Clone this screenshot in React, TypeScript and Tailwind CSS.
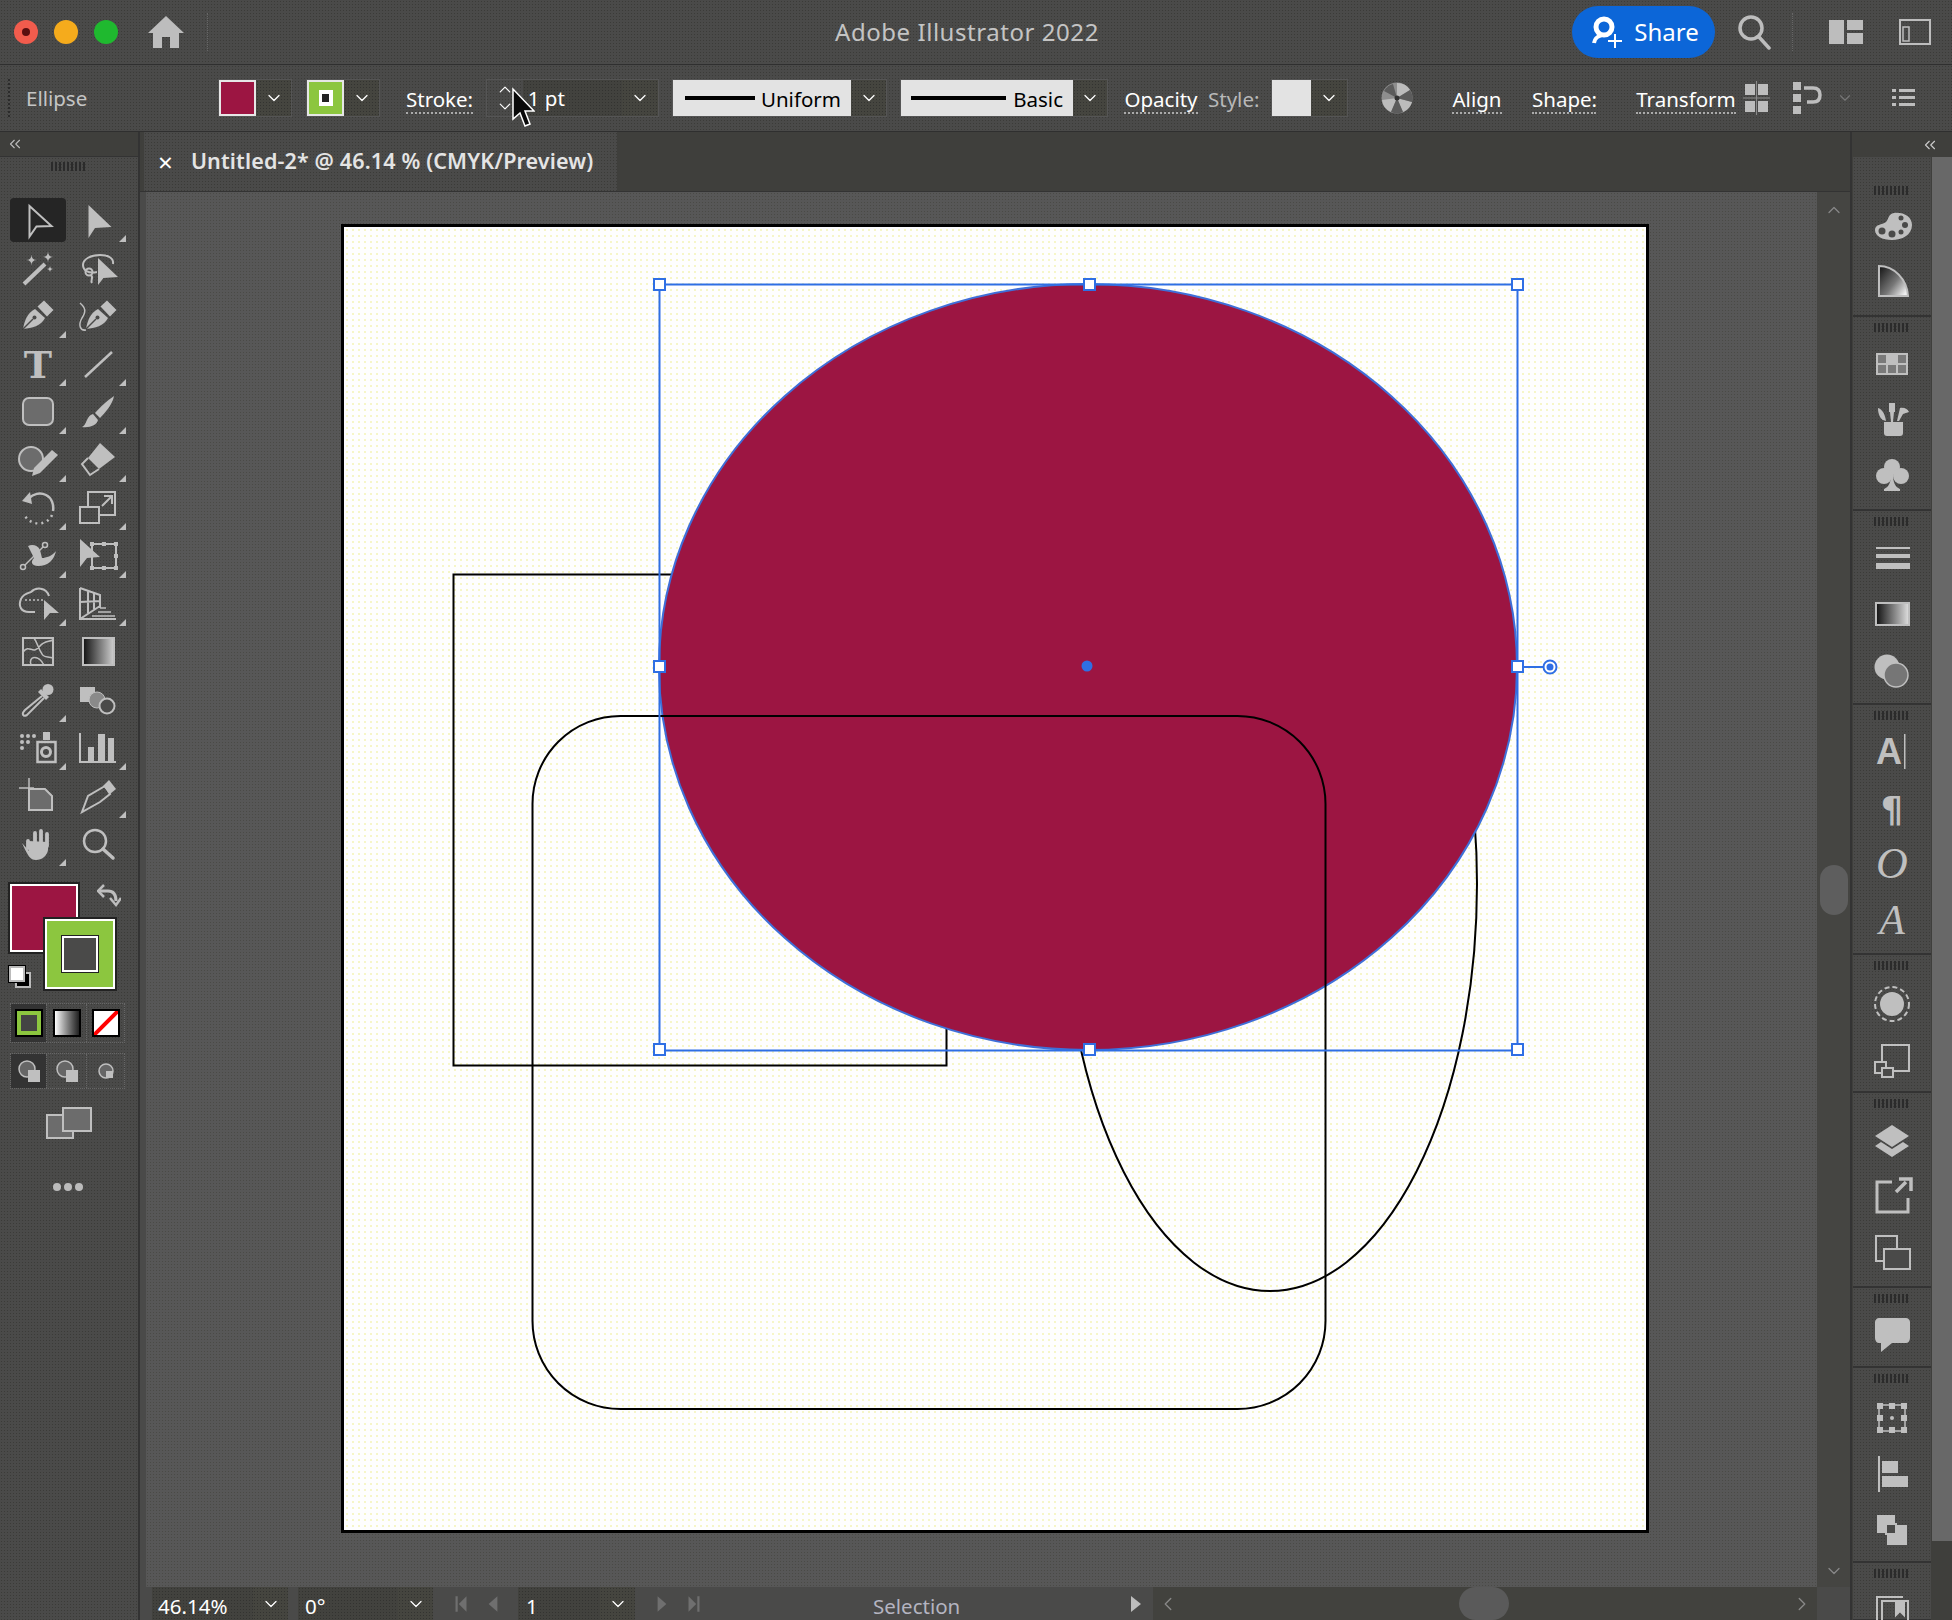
import { ChevronDown, ChevronUp, ChevronLeft, ChevronRight, ChevronsLeft } from 'lucide-react';
import type { ReactNode } from 'react';

const C = '#bfbfbf';
const PANEL = '#4a4a49';
const SANS = 'font-["Noto_Sans",sans-serif]';
const dots = 'bg-[radial-gradient(circle,#3b3b38_0.8px,transparent_0.9px)] bg-[length:3px_3px]';
const darkDots = 'bg-[radial-gradient(circle,#333330_0.8px,transparent_0.9px)] bg-[length:3px_3px]';

const star = (x: number, y: number, r: number) =>
  `M${x} ${y - r}Q${x} ${y} ${x + r} ${y}Q${x} ${y} ${x} ${y + r}Q${x} ${y} ${x - r} ${y}Q${x} ${y} ${x} ${y - r}Z`;

const Ico = ({ children, s = 40 }: { children: ReactNode; s?: number }) => (
  <svg width={s} height={s} viewBox="0 0 40 40" fill={C} className="overflow-visible block">
    {children}
  </svg>
);

const Nib = () => (
  <>
    <path d="M5 33C6.500 25 9 17 17 13L27 22C23 30 14 32 5 33Z" />
    <path d="M5 33L15 23" stroke={PANEL} strokeWidth="1.500" />
    <circle cx="16.500" cy="21.500" r="2" fill={PANEL} />
    <path d="M19.500 10.500L26 4.500L35.500 14L29 20.500Z" />
  </>
);

const tools: { icon: ReactNode; tri?: boolean; active?: boolean }[] = [
  { active: true, icon: <path d="M11.500 6L33.500 26L18.500 26.500L11.500 36.500Z" fill="none" stroke={C} strokeWidth="2" /> },
  { tri: true, icon: <path d="M10.500 5L33.500 27L17 28L10.500 38Z" /> },
  { icon: <><path d="M6 36L27 16" stroke={C} strokeWidth="4" /><path d={star(13.500, 12, 5.500)} /><path d={star(30, 9, 5.500)} /><path d={star(32, 21, 3.500)} /></> },
  { icon: <><path d="M19 24C10 26 5 22 5 17C5 11 13 7 22 7C30 7 36 10 35 16" fill="none" stroke={C} strokeWidth="2" /><circle cx="11" cy="24" r="3.500" fill="none" stroke={C} strokeWidth="2" /><path d="M13 27C16 30 12 32 14 35" fill="none" stroke={C} strokeWidth="2" /><path d="M20 10L40 29L25.500 30L20 37Z" /></> },
  { tri: true, icon: <Nib /> },
  { icon: <><g transform="translate(3 0)"><Nib /></g><path d="M2 7C8 12 8 16 4 22C0 29 2 35 8 34" fill="none" stroke={C} strokeWidth="1.500" /></> },
  { tri: true, icon: <text x="20" y="34" textAnchor="middle" fontSize="38" fontWeight="700" fontFamily="DejaVu Serif, serif" fill={C}>T</text> },
  { tri: true, icon: <path d="M7 33L34 8" stroke={C} strokeWidth="2.500" /> },
  { tri: true, icon: <rect x="5" y="6" width="30" height="27" rx="6" fill="#6c6c6c" stroke={C} strokeWidth="2" /> },
  { tri: true, icon: <><path d="M4 35C9 33 8 24 15 22L20 28C19 33 12 36 4 35Z" /><path d="M17 21C22 15 30 8 36 4C35 11 28 20 22 26Z" /></> },
  { tri: true, icon: <><circle cx="13" cy="19" r="12" fill="#6c6c6c" stroke={C} strokeWidth="2" /><path d="M14 36L16 28L34 10L40 15L22 33Z" /></> },
  { tri: true, icon: <><path d="M22 3L37 17L21 29L10 18Z" /><path d="M10 18L4 24L12 35L21 29" fill="none" stroke={C} strokeWidth="2" /></> },
  { tri: true, icon: <><path d="M4 13L12 4L14 16Z" /><path d="M11 10C15 6 22 4 28 7C34 10 36 17 35 23" fill="none" stroke={C} strokeWidth="2.500" /><path d="M34 27C30 37 14 39 7 28" fill="none" stroke={C} strokeWidth="2.500" strokeDasharray="2 4" /></> },
  { tri: true, icon: <><path d="M10 19V4H37V27H21" fill="none" stroke={C} strokeWidth="2" /><rect x="2" y="19" width="19" height="16" fill="none" stroke={C} strokeWidth="2" /><path d="M24 18L33 9M26 8H34V16" fill="none" stroke={C} strokeWidth="2" /></> },
  { tri: true, icon: <><path d="M10 10C14 8 20 9 22 14L24 22C28 22 34 20 38 15C36 24 30 30 20 30C14 30 12 26 16 22C14 18 12 14 10 10Z" /><path d="M5 31L27 9" stroke={C} strokeWidth="1.500" /><circle cx="5" cy="31" r="2.500" fill={PANEL} stroke={C} strokeWidth="1.500" /><circle cx="27" cy="9" r="2.500" fill={PANEL} stroke={C} strokeWidth="1.500" /></> },
  { tri: true, icon: <><rect x="14" y="8" width="24" height="24" fill="none" stroke={C} strokeWidth="2" /><g><rect x="12" y="6" width="4" height="4" /><rect x="24" y="6" width="4" height="4" /><rect x="36" y="6" width="4" height="4" /><rect x="36" y="18" width="4" height="4" /><rect x="12" y="30" width="4" height="4" /><rect x="24" y="30" width="4" height="4" /><rect x="36" y="30" width="4" height="4" /></g><path d="M2 3L22 21L9 22L2 31Z" /></> },
  { tri: true, icon: <><path d="M17 28H11C3 28 0 22 3 15C5 10 10 9 13 8C18 3 28 3 31 12" fill="none" stroke={C} strokeWidth="2" /><path d="M7 16H25" stroke={C} strokeWidth="1.500" strokeDasharray="2 2" /><path d="M26 16L41 29L32 29L26 36Z" /></> },
  { tri: true, icon: <g fill="none" stroke={C} strokeWidth="1.500"><path d="M2 4L22 11V24M2 4V35H38M2 35L22 22M2 18L22 17M10 7V29M16 9V25" strokeWidth="2" /><path d="M22 24H28M20 28H33M14 32H37" /></g> },
  { icon: <g fill="none" stroke={C} strokeWidth="2"><rect x="5" y="6" width="30" height="27" /><path d="M5 20C12 11 14 24 22 14C26 9 30 10 35 8M13 33C10 24 20 22 26 33M16 6C20 12 20 16 24 22C26 26 30 24 35 26" strokeWidth="1.500" /></g> },
  { icon: <><defs><linearGradient id="tg" x1="0" x2="1"><stop offset="0" stopColor="#111" /><stop offset="1" stopColor="#d0d0d0" /></linearGradient></defs><rect x="5" y="6" width="31" height="27" fill="url(#tg)" stroke={C} strokeWidth="2" /></> },
  { tri: true, icon: <><circle cx="30" cy="9.500" r="5.500" /><path d="M23 9L31 17L28 20L20 12Z" /><path d="M24 16L7 30C3 34 5 37 9 35L26 18" fill="none" stroke={C} strokeWidth="2" /></> },
  { icon: <><rect x="2" y="7" width="15" height="15" /><circle cx="19" cy="20" r="8" fill="#8a8a8a" stroke={C} strokeWidth="1" /><circle cx="29" cy="26" r="7.500" fill={PANEL} stroke={C} strokeWidth="2" /></> },
  { tri: true, icon: <><g><circle cx="4" cy="8" r="2" /><circle cx="10" cy="8" r="2" /><circle cx="16" cy="8" r="2" /><circle cx="4" cy="14" r="2" /><circle cx="10" cy="14" r="2" /><circle cx="4" cy="20" r="2" /></g><rect x="25" y="4" width="7" height="8" /><rect x="19.500" y="14" width="18" height="20" fill="none" stroke={C} strokeWidth="2.500" /><circle cx="28" cy="24" r="4.500" fill="none" stroke={C} strokeWidth="3" /></> },
  { tri: true, icon: <><path d="M2 5V34H38" fill="none" stroke={C} strokeWidth="2" /><rect x="10" y="19" width="6" height="15" /><rect x="20" y="6" width="7" height="28" /><rect x="30" y="10" width="6" height="24" /></> },
  { icon: <><path d="M11 2V17M1 12H16" stroke={C} strokeWidth="1.500" /><path d="M11 13H27L34 20V34H11Z" fill="#6c6c6c" stroke={C} strokeWidth="2" /></> },
  { tri: true, icon: <><path d="M4 36L10 20L27 10L32 18L22 26Z" fill="none" stroke={C} strokeWidth="2" /><path d="M25 10L31 4L38 13L32 18Z" /></> },
  { tri: true, icon: <><path d="M10 24V17M17 22V9M23 21V7M29 22V10" stroke={C} strokeWidth="3.800" strokeLinecap="round" fill="none" /><path d="M4 19L11 27L10 17L30 18L30 26C29 32 24 36 18 36C12 36 10 32 4 19Z" /></> },
  { icon: <><circle cx="17" cy="17" r="11" fill="none" stroke={C} strokeWidth="2.500" /><path d="M25 25L35 34" stroke={C} strokeWidth="3.500" strokeLinecap="round" /></> },
];

const Grip = () => (
  <div className="w-[36px] h-[9px] bg-[repeating-linear-gradient(90deg,#2b2b2b_0_2px,transparent_2px_4px)]" />
);

const dock: { h: string; top: string; icons: ReactNode[] }[] = [
  {
    h: 'h-[160px]', top: 'mt-[2px]', icons: [
      <><path d="M22 8C32 7 40 12 40 20C40 30 30 35 20 35C10 35 3 31 3 25C3 19 10 20 14 17C17 14 16 9 22 8Z" /><g fill={PANEL}><circle cx="10" cy="26" r="3.500" /><circle cx="20" cy="29" r="3.500" /><circle cx="29" cy="27" r="2.500" /><circle cx="33" cy="20" r="3" /><circle cx="29" cy="13" r="2.500" /></g></>,
      <><defs><linearGradient id="dg" x1="0" y1="0" x2="1" y2="0.8"><stop offset="0" stopColor="#111" /><stop offset="0.6" stopColor="#777" /><stop offset="1" stopColor="#f0f0f0" /></linearGradient></defs><path d="M7 5C22 5 35 18 36 35H7Z" fill="url(#dg)" stroke={C} strokeWidth="2" /></>,
    ],
  },
  {
    h: 'h-[194px]', top: 'mt-[4px]', icons: [
      <><rect x="4" y="9" width="32" height="22" /><g fill="#7a7a7a"><rect x="6" y="11" width="8" height="8" /><rect x="26" y="11" width="8" height="8" /><rect x="6" y="21" width="8" height="8" /><rect x="16" y="21" width="8" height="8" /><rect x="26" y="21" width="8" height="8" /></g></>,
      <><path d="M12 22H31V33C31 35 30 36 28 36H15C13 36 12 35 12 33Z" /><rect x="17" y="3" width="6" height="9" /><path d="M18 12H22L21 22H19Z" /><path d="M6 8C10 9 13 14 14 21L11 20C8 18 6 14 6 8Z" /><path d="M28 8C32 7 36 9 37 12L31 14L27 21H25L28 8Z" /></>,
      <><circle cx="20" cy="11" r="8" /><circle cx="12" cy="20" r="8" /><circle cx="29" cy="20" r="8" /><path d="M19 18H21C21 26 23 31 28 33V35H12V33C17 31 19 26 19 18Z" /></>,
    ],
  },
  {
    h: 'h-[194px]', top: 'mt-[4px]', icons: [
      <><rect x="4" y="9" width="34" height="2" /><rect x="4" y="16" width="34" height="4" /><rect x="4" y="25" width="34" height="6" /></>,
      <><defs><linearGradient id="dg2" x1="0" x2="1"><stop offset="0" stopColor="#111" /><stop offset="1" stopColor="#e0e0e0" /></linearGradient></defs><rect x="4" y="9" width="33" height="22" fill="url(#dg2)" stroke={C} strokeWidth="2" /></>,
      <><circle cx="15" cy="17" r="12.500" /><circle cx="24" cy="25" r="12" fill="#767676" stroke={C} strokeWidth="1.500" /></>,
    ],
  },
  {
    h: 'h-[250px]', top: 'mt-[3px]', icons: [
      <><text x="17" y="33" textAnchor="middle" fontSize="36" fontWeight="700" fontFamily="Liberation Sans, sans-serif" fill={C}>A</text><rect x="32" y="3" width="1.500" height="35" /></>,
      <text x="20" y="35" textAnchor="middle" fontSize="35" fontWeight="700" fontFamily="DejaVu Sans, sans-serif" fill={C}>¶</text>,
      <text x="20" y="35" textAnchor="middle" fontSize="44" fontStyle="italic" fontFamily="Liberation Serif, serif" fill={C}>O</text>,
      <text x="20" y="35" textAnchor="middle" fontSize="42" fontStyle="italic" fontFamily="Liberation Serif, serif" fill={C}>A</text>,
    ],
  },
  {
    h: 'h-[138px]', top: 'mt-[6px]', icons: [
      <><circle cx="20" cy="20" r="12" /><circle cx="20" cy="20" r="17" fill="none" stroke={C} strokeWidth="2" strokeDasharray="5 3" /></>,
      <g fill="none" stroke={C} strokeWidth="2"><rect x="10" y="5" width="27" height="26" /><rect x="3" y="22" width="11" height="11" fill={PANEL} /><rect x="10" y="28" width="11" height="9" fill={PANEL} /></g>,
    ],
  },
  {
    h: 'h-[195px]', top: 'mt-[4px]', icons: [
      <><path d="M20 5L37 16L20 27L3 16Z" /><path d="M9 22L20 29L31 22L37 26L20 37L3 26Z" /></>,
      <><path d="M20 6H5V36H36V22" fill="none" stroke={C} strokeWidth="3" /><path d="M24 16L34 6M27 3H39V15" fill="none" stroke={C} strokeWidth="3.500" /></>,
      <g fill="none" stroke={C} strokeWidth="2"><rect x="4" y="4" width="21" height="25" /><rect x="12" y="17" width="26" height="20" fill={PANEL} /></g>,
    ],
  },
  {
    h: 'h-[80px]', top: 'mt-[2px]', icons: [
      <path d="M7 5H34C36 5 38 7 38 9V25C38 28 36 30 34 30H20L9 39V30H7C5 30 3 28 3 25V9C3 7 5 5 7 5Z" />,
    ],
  },
  {
    h: 'h-[195px]', top: 'mt-[7px]', icons: [
      <><rect x="7" y="7" width="26" height="26" fill="none" stroke={C} strokeWidth="1.500" /><g><rect x="5" y="5" width="6" height="6" /><rect x="17" y="5" width="6" height="6" /><rect x="29" y="5" width="6" height="6" /><rect x="5" y="17" width="6" height="6" /><rect x="29" y="17" width="6" height="6" /><rect x="5" y="29" width="6" height="6" /><rect x="17" y="29" width="6" height="6" /><rect x="29" y="29" width="6" height="6" /><circle cx="20" cy="20" r="2" /></g></>,
      <><rect x="6" y="2" width="2" height="36" /><rect x="10" y="7" width="16" height="12" /><rect x="10" y="22" width="26" height="11" /></>,
      <><rect x="5" y="5" width="18" height="18" /><rect x="15" y="15" width="20" height="20" /><rect x="14" y="14" width="10" height="10" fill={PANEL} stroke={C} strokeWidth="2" /></>,
    ],
  },
  {
    h: 'h-[58px]', top: 'mt-[5px]', icons: [
      <g fill="none" stroke={C} strokeWidth="2"><path d="M5 38V6H31" /><path d="M10 10H36V40H10Z" /><path d="M24 10V24L28 20L32 24V10" fill={C} /></g>,
    ],
  },
];

const Chev = ({ dim }: { dim?: boolean }) => (
  <ChevronDown size={20} strokeWidth={1.500} className={dim ? 'text-[#777]' : 'text-white'} />
);

const Drop = ({ w }: { w: string }) => (
  <div className={`${w} h-full flex items-center justify-center ${darkDots} bg-[#45453f]`}>
    <Chev />
  </div>
);

const Label = ({ children, cn }: { children: ReactNode; cn: string }) => (
  <span className={`${cn} mt-[3px] text-[20.500px] leading-[26px] text-white border-b-2 border-dotted border-[#aaa] whitespace-nowrap text-center`}>
    {children}
  </span>
);

const Tool = ({ icon, tri, active }: { icon: ReactNode; tri?: boolean; active?: boolean }) => (
  <div className="relative w-[60px] h-[48px] flex items-center justify-center">
    {active && <div className="absolute inset-x-[2px] inset-y-[2px] bg-[#252525] rounded-[4px]" />}
    <div className="relative">
      <Ico>{icon}</Ico>
    </div>
    {tri && <div className="absolute right-[2px] bottom-[2px] w-[7px] h-[7px] bg-[#bfbfbf] [clip-path:polygon(100%_0,100%_100%,0_100%)]" />}
  </div>
);

const NavIcon = ({ d }: { d: string }) => (
  <svg width="16" height="22" viewBox="0 0 14 20" fill="#6f6f6f"><path d={d} /></svg>
);

export default function App() {
  return (
    <div className={`w-[1952px] h-[1620px] flex flex-col overflow-hidden bg-[#4a4a49] text-[#c8c8c8] ${SANS}`}>
      {/* title bar */}
      <div className={`relative h-[65px] shrink-0 flex items-center border-b border-[#2f2f2f] bg-[#4a4a49] ${dots}`}>
        <div className="ml-[14px] w-[24px] h-[24px] rounded-full bg-[#f25c4d] flex items-center justify-center">
          <div className="w-[8px] h-[8px] rounded-full bg-[#5a0f0f]" />
        </div>
        <div className="ml-[16px] w-[24px] h-[24px] rounded-full bg-[#f5ab1c]" />
        <div className="ml-[16px] w-[24px] h-[24px] rounded-full bg-[#1fb92f]" />
        <svg className="ml-[30px]" width="36" height="32" viewBox="0 0 36 32" fill="#bdbdbd">
          <path d="M18 0L36 17H31V32H22V21H14V32H5V17H0Z" />
        </svg>
        <div className="ml-[23px] w-px h-[38px] border-l border-dotted border-[#666]" />
        <span className="absolute left-[835px] text-[24px] tracking-[0.55px] text-[#c4c4c4] whitespace-nowrap">Adobe Illustrator 2022</span>
        <div className="ml-auto flex items-center">
          <div className="w-[143px] h-[52px] rounded-full bg-[#0c66d8] flex items-center justify-center gap-[10px]">
            <svg width="36" height="36" viewBox="0 0 36 36" fill="none" stroke="white">
              <circle cx="16" cy="13" r="8" strokeWidth="5" />
              <path d="M6 29C7 23 11 22 14 21" strokeWidth="4" />
              <path d="M27 20V34M20 27H34" strokeWidth="2" />
            </svg>
            <span className="text-[24px] text-white">Share</span>
          </div>
          <svg className="ml-[22px]" width="34" height="36" viewBox="0 0 34 36" fill="none" stroke="#bdbdbd" strokeWidth="3.500">
            <circle cx="14" cy="14" r="11" />
            <path d="M22 23L32 34" strokeLinecap="round" />
          </svg>
          <div className="ml-[21px] w-px h-[38px] border-l border-dotted border-[#666]" />
          <svg className="ml-[36px]" width="34" height="24" viewBox="0 0 34 24" fill="#bdbdbd">
            <rect x="0" y="0" width="15" height="24" />
            <rect x="18" y="0" width="16" height="10" />
            <rect x="18" y="13" width="16" height="11" />
          </svg>
          <svg className="ml-[36px] mr-[21px]" width="32" height="26" viewBox="0 0 32 26" fill="none" stroke="#bdbdbd" strokeWidth="2">
            <rect x="1" y="1" width="30" height="24" />
            <rect x="4" y="8" width="6" height="14" strokeWidth="1.500" />
          </svg>
        </div>
      </div>

      {/* control bar */}
      <div className={`relative h-[67px] shrink-0 flex items-center border-b border-[#2f2f2f] bg-[#4a4a49] ${dots}`}>
        <div className="ml-[8px] w-[2px] h-[38px] border-l-2 border-dotted border-[#2b2b2b]" />
        <span className="ml-[16px] mt-[1px] w-[192px] text-[20.500px] text-[#c4c4c4]">Ellipse</span>
        <div className="w-[74px] h-[38px] flex border border-[#555]">
          <div className="w-[38px] h-full bg-[#9c1542] border-2 border-[#e6e6e6]" />
          <Drop w="w-[36px]" />
        </div>
        <div className="ml-[14px] w-[74px] h-[38px] flex border border-[#555]">
          <div className="w-[38px] h-full bg-[#8cc63f] border-2 border-[#e6e6e6] flex items-center justify-center">
            <div className="w-[14px] h-[16px] bg-white flex items-center justify-center">
              <div className="w-[7px] h-[8px] bg-[#222]" />
            </div>
          </div>
          <Drop w="w-[36px]" />
        </div>
        <Label cn="ml-[26px] w-[67px]">Stroke:</Label>
        <div className="ml-[13px] w-[173px] h-[38px] flex border border-[#555]">
          <div className="w-[36px] h-full flex flex-col items-center justify-center">
            <ChevronUp size={20} strokeWidth={1.500} className="text-white -mb-[1px]" />
            <ChevronDown size={20} strokeWidth={1.500} className="text-white -mt-[1px]" />
          </div>
          <div className={`w-[100px] h-full flex items-center ${darkDots} bg-[#42423e] text-[20.500px] text-white`}>
            <span className="ml-[5px]">1 pt</span>
          </div>
          <Drop w="w-[36px]" />
        </div>
        <div className="ml-[13px] w-[215px] h-[38px] flex border border-[#555]">
          <div className="w-[178px] h-full bg-[#e3e3e3] flex items-center justify-between pl-[12px] pr-[10px] text-black text-[20.500px]">
            <div className="w-[70px] h-[4px] bg-black" />
            <span className="mt-[2px]">Uniform</span>
          </div>
          <Drop w="flex-1" />
        </div>
        <div className="ml-[13px] w-[208px] h-[38px] flex border border-[#555]">
          <div className="w-[172px] h-full bg-[#e3e3e3] flex items-center justify-between px-[10px] text-black text-[20.500px]">
            <div className="w-[95px] h-[4px] bg-black" />
            <span className="mt-[2px]">Basic</span>
          </div>
          <Drop w="flex-1" />
        </div>
        <Label cn="ml-[16px] w-[74px]">Opacity</Label>
        <span className="ml-[10px] mt-[2px] w-[53px] text-[20.500px] text-[#b8b8b8]">Style:</span>
        <div className="ml-[10px] w-[77px] h-[38px] flex border border-[#555]">
          <div className="w-[39px] h-full bg-[#e3e3e3]" />
          <Drop w="flex-1" />
        </div>
        <svg className="ml-[33px]" width="32" height="32" viewBox="0 0 32 32">
          <circle cx="16" cy="16" r="15.500" fill="#8e8e8e" />
          <path d="M16 16L16 1A15 15 0 0 1 29 8ZM16 16L31 20A15 15 0 0 1 22 30ZM16 16L10 30A15 15 0 0 1 1 18Z" fill="#bcbcbc" />
          <path d="M16 16L3 9A15 15 0 0 1 12 2ZM16 16L29 8A15 15 0 0 1 31 20ZM16 16L22 30A15 15 0 0 1 10 30Z" fill="#5c5c5c" />
          <circle cx="16" cy="16" r="2.500" fill="#333" />
        </svg>
        <Label cn="ml-[39px] w-[50px]">Align</Label>
        <Label cn="ml-[30px] w-[64px]">Shape:</Label>
        <Label cn="ml-[40px] w-[100px]">Transform</Label>
        <svg className="ml-[7px]" width="27" height="34" viewBox="0 0 27 34" fill="#bdbdbd">
          <rect x="2" y="3" width="10" height="11" /><rect x="15" y="3" width="10" height="11" />
          <rect x="2" y="20" width="10" height="11" /><rect x="15" y="20" width="10" height="11" />
          <path d="M0 17H27M13.500 0V34" stroke="#8a8a8a" strokeWidth="1" />
        </svg>
        <svg className="ml-[23px]" width="29" height="32" viewBox="0 0 29 32" fill="#bdbdbd">
          <rect x="0" y="0" width="8" height="8" /><rect x="0" y="12" width="8" height="8" /><rect x="0" y="24" width="8" height="8" />
          <path d="M11 6H20C25 6 27 9 27 13C27 17 25 20 20 20H14" fill="none" stroke="#bdbdbd" strokeWidth="3.500" />
        </svg>
        <ChevronDown size={18} strokeWidth={1.500} className="ml-[14px] text-[#777]" />
        <svg className="ml-[38px]" width="23" height="20" viewBox="0 0 23 20" fill="#bdbdbd">
          <rect x="0" y="1" width="4" height="3" /><rect x="7" y="1" width="16" height="3" />
          <rect x="0" y="8" width="4" height="3" /><rect x="7" y="8" width="16" height="3" />
          <rect x="0" y="15" width="4" height="3" /><rect x="7" y="15" width="16" height="3" />
        </svg>
        {/* pointer over the stepper */}
        <svg className="absolute left-[511px] top-[22px]" width="24" height="42" viewBox="0 0 24 42">
          <path d="M2 2L2 32L9 26L14 39L19 37L14 24L23 24Z" fill="#0a0a0a" stroke="white" strokeWidth="1.500" />
        </svg>
      </div>

      <div className="flex-1 flex min-h-0">
        {/* tools */}
        <div className="w-[140px] shrink-0 flex flex-col border-r-2 border-[#333]">
          <div className="h-[25px] bg-[#3f3f3c] flex items-center border-b border-[#333] pl-[6px]">
            <ChevronsLeft size={18} strokeWidth={1.500} className="text-[#bbb]" />
          </div>
          <div className={`flex-1 flex flex-col bg-[#4a4a49] ${dots}`}>
            <div className="h-[39px] pt-[5px] flex justify-center"><Grip /></div>
            <div className="ml-[8px] grid grid-cols-[60px_60px]">
              {tools.map((t, i) => <Tool key={i} {...t} />)}
            </div>
            <div className="relative ml-[10px] mt-[16px] w-[118px] h-[105px]">
              <div className="absolute left-0 top-0 w-[68px] h-[68px] bg-[#9c1542] border-2 border-white outline-2 outline-[#222]" />
              <div className="absolute left-[35px] top-[35px] w-[70px] h-[70px] bg-[#8cc63f] border-2 border-white outline-2 outline-[#222] flex items-center justify-center">
                <div className="w-[36px] h-[36px] bg-[#4a4a49] border-2 border-white outline outline-[#222]" />
              </div>
              <svg className="absolute left-[87px] top-[0px]" width="24" height="24" viewBox="0 0 24 24" fill="none" stroke="#bdbdbd" strokeWidth="3">
                <path d="M3 7H11C17 7 19 11 19 17" />
                <path d="M7 1L1 7L7 13M13 14L19 21L24 14" strokeWidth="2.500" />
              </svg>
              <div className="absolute left-[-1px] top-[82px] w-[16px] h-[16px] bg-white border-2 border-[#bbb] outline outline-black z-10" />
              <div className="absolute left-[5px] top-[88px] w-[16px] h-[16px] bg-black border-2 border-[#bbb]" />
            </div>
            <div className="ml-[10px] mt-[14px] w-[115px] h-[40px] flex border border-dotted border-[#666]">
              <div className="w-[35px] h-full bg-[#333] flex items-center justify-center">
                <div className="w-[24px] h-[24px] bg-[#444] border-[4px] border-[#8cc63f] outline-2 outline-black" />
              </div>
              <div className="w-[41px] h-full flex items-center justify-center border-x border-dotted border-[#666]">
                <div className="w-[24px] h-[24px] bg-gradient-to-r from-white to-[#222] outline-2 outline-black" />
              </div>
              <div className="flex-1 h-full flex items-center justify-center">
                <svg width="24" height="24" viewBox="0 0 24 24" className="outline-2 outline-black">
                  <rect width="24" height="24" fill="white" />
                  <path d="M0 24L24 0" stroke="#ff0000" strokeWidth="4" />
                </svg>
              </div>
            </div>
            <div className="ml-[10px] mt-[10px] w-[115px] h-[36px] flex border border-dotted border-[#666]">
              <div className="w-[35px] h-full bg-[#333] flex items-center justify-center">
                <svg width="24" height="24" viewBox="0 0 24 24"><circle cx="10" cy="10" r="8" fill="#666" stroke={C} strokeWidth="1.500" /><rect x="11" y="11" width="12" height="12" fill={C} /></svg>
              </div>
              <div className="w-[41px] h-full flex items-center justify-center border-x border-dotted border-[#666]">
                <svg width="24" height="24" viewBox="0 0 24 24"><circle cx="10" cy="10" r="8" fill="#666" stroke={C} strokeWidth="1.500" /><rect x="11" y="11" width="12" height="12" fill={C} /></svg>
              </div>
              <div className="flex-1 h-full flex items-center justify-center">
                <svg width="20" height="20" viewBox="0 0 20 20"><circle cx="10" cy="10" r="7" fill="#666" stroke={C} strokeWidth="1.500" /><rect x="10" y="10" width="7" height="7" fill={C} /></svg>
              </div>
            </div>
            <svg className="ml-[46px] mt-[18px]" width="46" height="32" viewBox="0 0 46 32" fill="#6c6c6c" stroke={C} strokeWidth="2">
              <rect x="1" y="8" width="26" height="23" />
              <rect x="17" y="1" width="28" height="23" />
            </svg>
            <div className="ml-[53px] mt-[44px] flex gap-[3px]">
              <div className="w-[8px] h-[8px] rounded-full bg-[#bbb]" />
              <div className="w-[8px] h-[8px] rounded-full bg-[#bbb]" />
              <div className="w-[8px] h-[8px] rounded-full bg-[#bbb]" />
            </div>
          </div>
        </div>

        {/* document */}
        <div className="w-[1710px] flex flex-col min-w-0">
          <div className="h-[60px] shrink-0 flex border-b border-[#333] bg-[#3f3f3c]">
            <div className={`ml-[4px] w-[473px] flex items-center bg-[#4a4a49] ${dots}`}>
              <span className="ml-[14px] text-[26px] leading-none text-white">×</span>
              <span className="ml-[18px] text-[21.500px] font-semibold tracking-[0.15px] text-[#e4e4e4] whitespace-nowrap">Untitled-2* @ 46.14 % (CMYK/Preview)</span>
            </div>
          </div>
          <div className="flex-1 flex min-h-0">
            <div className="ml-[6px] flex-1 pl-[195px] pt-[32px] bg-[#575757] bg-[radial-gradient(circle,#4a4a46_0.8px,transparent_0.9px)] bg-[length:3px_3px]">
              <div className="w-[1308px] h-[1309px] border-[3px] border-black bg-[#fefefe] bg-[radial-gradient(circle,#f6f6c8_0.8px,transparent_0.9px)] bg-[length:6px_6px]">
                <svg width="1302" height="1303" viewBox="344 227 1302 1303" className="block">
                  <g fill="none" stroke="#000" strokeWidth="2">
                    <rect x="453.500" y="574.500" width="493" height="491" />
                    <ellipse cx="1270" cy="884" rx="207" ry="407" />
                  </g>
                  <ellipse cx="1088" cy="667" rx="429" ry="383" fill="#9c1542" stroke="#3f6fd8" strokeWidth="2" />
                  <rect x="532.500" y="716" width="793" height="693" rx="88" fill="none" stroke="#000" strokeWidth="2" />
                  <g stroke="#2f6fe4" strokeWidth="2" fill="none">
                    <rect x="659.500" y="284.500" width="858" height="766" />
                    <path d="M1517 667H1543" />
                    <circle cx="1550" cy="667" r="6.500" fill="white" />
                  </g>
                  <circle cx="1550" cy="667" r="3.500" fill="#2f6fe4" />
                  <circle cx="1087" cy="666" r="5.500" fill="#2f6fe4" />
                  <g fill="white" stroke="#2f6fe4" strokeWidth="2">
                    <rect x="654" y="279" width="11" height="11" />
                    <rect x="1084" y="279" width="11" height="11" />
                    <rect x="1512" y="279" width="11" height="11" />
                    <rect x="654" y="661" width="11" height="11" />
                    <rect x="1512" y="661" width="11" height="11" />
                    <rect x="654" y="1044" width="11" height="11" />
                    <rect x="1084" y="1044" width="11" height="11" />
                    <rect x="1512" y="1044" width="11" height="11" />
                  </g>
                </svg>
              </div>
            </div>
            <div className="w-[33px] shrink-0 flex flex-col items-center bg-[#454542] pt-[8px] pb-[6px]">
              <ChevronUp size={20} strokeWidth={1.500} className="text-[#888]" />
              <div className="mt-[645px] w-[28px] h-[50px] rounded-full bg-[#5e5e5e]" />
              <ChevronDown size={20} strokeWidth={1.500} className="mt-auto text-[#888]" />
            </div>
          </div>
          <div className="h-[33px] shrink-0 flex items-center bg-[#4a4a49] text-white text-[20.500px]">
            <div className={`ml-[12px] w-[101px] h-full flex items-center pl-[6px] pt-[5px] ${darkDots} bg-[#42423e]`}>46.14%</div>
            <Drop w="w-[35px]" />
            <div className={`ml-[10px] w-[100px] h-full flex items-center pl-[7px] pt-[5px] ${darkDots} bg-[#42423e]`}>0°</div>
            <Drop w="w-[35px]" />
            <div className="ml-[3px] w-[82px] flex items-center justify-center gap-[16px]">
              <NavIcon d="M2 3H4V17H2ZM12 3V17L5 10Z" />
              <NavIcon d="M11 3V17L3 10Z" />
            </div>
            <div className={`w-[82px] h-full flex items-center pl-[8px] pt-[5px] ${darkDots} bg-[#42423e]`}>1</div>
            <Drop w="w-[35px]" />
            <div className="ml-[2px] w-[81px] flex items-center justify-center gap-[16px]">
              <NavIcon d="M3 3V17L11 10Z" />
              <NavIcon d="M2 3V17L9 10ZM10 3H12V17H10Z" />
            </div>
            <span className="ml-[155px] pt-[5px] w-[90px] text-[20.500px] text-[#b4b4c0]">Selection</span>
            <svg className="ml-[167px]" width="12" height="20" viewBox="0 0 12 20" fill="#bdbdbd"><path d="M1 2V18L11 10Z" /></svg>
            <div className="ml-[11px] flex-1 h-full flex items-center justify-between bg-[#42423e] px-[4px]">
              <ChevronLeft size={22} strokeWidth={1.500} className="text-[#888]" />
              <div className="ml-[280px] w-[50px] h-full rounded-full bg-[#5a5a5a]" />
              <ChevronRight size={22} strokeWidth={1.500} className="ml-auto text-[#888]" />
            </div>
            <div className="w-[33px] h-full" />
          </div>
        </div>

        {/* panel dock */}
        <div className="w-[102px] shrink-0 flex flex-col bg-[#3f3f3c] border-l-2 border-[#333]">
          <div className="h-[25px] flex items-center justify-end pr-[13px]">
            <ChevronsLeft size={18} strokeWidth={1.500} className="text-[#ccc]" />
          </div>
          <div className="flex-1 flex min-h-0">
            <div className={`ml-[1px] w-[78px] bg-[#4a4a49] ${dots}`}>
              {dock.map((g, i) => (
                <div key={i} className={`${g.h} flex flex-col items-center border-b-2 border-[#333]`}>
                  <div className={i === 0 ? 'mt-[29px]' : 'mt-[6px]'}><Grip /></div>
                  <div className={`${g.top} flex flex-col items-center`}>
                    {g.icons.map((icon, j) => (
                      <div key={j} className="h-[56px] flex items-center justify-center">
                        <Ico>{icon}</Ico>
                      </div>
                    ))}
                  </div>
                </div>
              ))}
            </div>
            <div className="ml-[1px] w-[20px] flex flex-col">
              <div className="h-[1384px] bg-[#686868]" />
            </div>
          </div>
        </div>
      </div>
    </div>
  );
}
